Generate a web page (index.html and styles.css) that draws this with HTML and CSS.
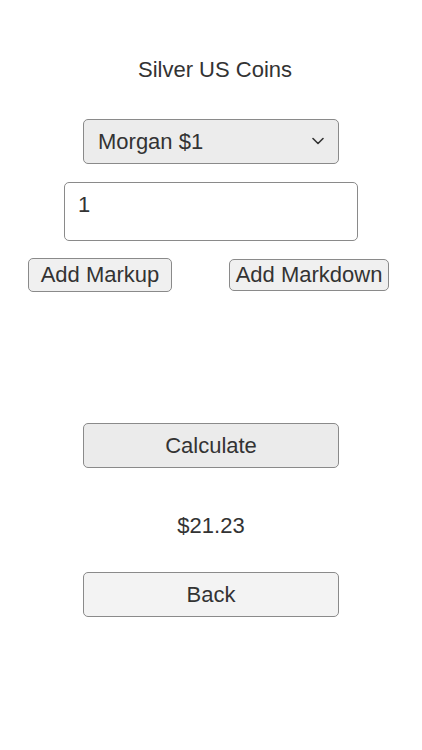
FILE: index.html
```html
<!DOCTYPE html>
<html lang="en">
<head>
    <meta charset="UTF-8">
    <meta name="viewport" content="width=device-width, initial-scale=1.0">
    <title>Silver US Coins</title>
    <link rel="stylesheet" href="styles.css">
</head>
<body>
    <div class="coin-page">
        <h1 class="page-title">Silver US Coins</h1>

        <!-- Coin picker -->
        <div class="select-wrap">
            <select id="coin" class="coin-select">
                <option>Morgan $1</option>
                <option>Peace $1</option>
                <option>Walking Liberty 50c</option>
                <option>Washington 25c</option>
            </select>
            <svg class="chevron" width="12" height="8" viewBox="0 0 12 8">
                <path d="M1 1.5 L6 6.5 L11 1.5" fill="none" stroke="#333" stroke-width="1.6" stroke-linecap="round" stroke-linejoin="round"/>
            </svg>
        </div>

        <textarea id="qty" class="qty-input">1</textarea>

        <div class="mark-row">
            <button class="btn-small btn-markup">Add Markup</button>
            <button class="btn-small btn-markdown">Add Markdown</button>
        </div>

        <button class="btn-wide btn-calc">Calculate</button>

        <p class="result">$21.23</p>

        <button class="btn-wide btn-back">Back</button>
    </div>
</body>
</html>
```

FILE: styles.css
```css
* {
    margin: 0;
    padding: 0;
    box-sizing: border-box;
    font-family: "Liberation Sans", Arial, sans-serif;
}

body {
    background-color: #ffffff;
    color: #333;
}

.coin-page {
    display: flex;
    flex-direction: column;
    align-items: center;
    padding-top: 57px;
}

.page-title {
    font-size: 22px;
    font-weight: normal;
    line-height: 26px;
    color: #333;
    margin-left: 8px;
}

.select-wrap {
    position: relative;
    margin-top: 36px;
    width: 256px;
    height: 45px;
}

.coin-select {
    appearance: none;
    -webkit-appearance: none;
    width: 100%;
    height: 100%;
    padding-left: 14px;
    font-size: 22px;
    color: #333;
    background-color: #ececec;
    border: 1px solid #8a8a8a;
    border-radius: 5px;
    outline: none;
}

.chevron {
    position: absolute;
    right: 15px;
    top: 18px;
    pointer-events: none;
}

.qty-input {
    margin-top: 18px;
    width: 294px;
    height: 59px;
    padding: 9px 13px;
    font-size: 22px;
    line-height: 26px;
    color: #333;
    background-color: #ffffff;
    border: 1px solid #8a8a8a;
    border-radius: 5px;
    resize: none;
    outline: none;
}

.mark-row {
    margin-top: 17px;
    width: 100%;
    height: 34px;
    display: flex;
    justify-content: space-between;
    align-items: center;
    padding: 0 33px 0 28px;
}

button {
    font-size: 22px;
    color: #333;
    border: 1px solid #8a8a8a;
    border-radius: 5px;
    cursor: pointer;
}

.btn-small {
    background-color: #f0f0f0;
    padding: 0;
}

.btn-markup {
    width: 144px;
    height: 34px;
}

.btn-markdown {
    width: 160px;
    height: 32px;
}

.btn-wide {
    width: 256px;
    height: 45px;
}

.btn-calc {
    margin-top: 131px;
    background-color: #ebebeb;
}

.result {
    margin-top: 45px;
    font-size: 22px;
    line-height: 26px;
}

.btn-back {
    margin-top: 33px;
    background-color: #f3f3f3;
}
```
